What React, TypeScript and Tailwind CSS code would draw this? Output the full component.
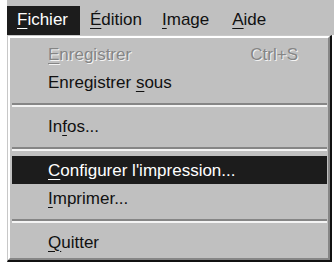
import React from "react";

const U = ({ children }: { children: React.ReactNode }) => (
  <span className="underline decoration-1 underline-offset-[3px]">{children}</span>
);

const Item = ({
  children,
  active,
  disabled,
  shortcut,
}: {
  children: React.ReactNode;
  active?: boolean;
  disabled?: boolean;
  shortcut?: string;
}) => (
  <div
    className={`flex h-[28px] items-center justify-between pl-[36px] pr-[29px] ${
      active ? "bg-[#1c1c1c] text-white" : disabled ? "text-[#858585]" : "text-[#111]"
    }`}
    style={disabled ? { textShadow: "1px 1px 0 #f4f4f4" } : undefined}
  >
    <span>{children}</span>
    {shortcut && <span>{shortcut}</span>}
  </div>
);

const Sep = () => (
  <div className="flex h-[16px] flex-col pt-[7px]">
    <div className="h-[2px] bg-[#868686]" />
    <div className="h-[2px] bg-[#f4f4f4]" />
  </div>
);

export default function App() {
  return (
    <div
      className="h-[265px] w-[334px] overflow-hidden bg-white pl-[7px] text-[17px] leading-none"
      style={{ fontFamily: '"Liberation Sans", Arial, sans-serif' }}
    >
      <div className="flex h-[35px] items-end bg-[#c0c0c0] text-[#111]">
        <div className="flex h-[29px] w-[73px] items-center bg-[#1c1c1c] pl-[10px] pb-[2px] text-white">
          <U>F</U>ichier
        </div>
        <div className="flex h-[29px] items-center px-[10px] pb-[2px]">
          <U>É</U>dition
        </div>
        <div className="flex h-[29px] items-center px-[10px] pb-[2px]">
          <U>I</U>mage
        </div>
        <div className="ml-[3px] flex h-[29px] items-center px-[10px] pb-[2px]">
          <U>A</U>ide
        </div>
      </div>
      <div className="w-[325px] border-l border-t border-r-2 border-b-2 border-l-[#c8c8c8] border-t-[#c8c8c8] border-r-[#111] border-b-[#111] bg-[#c0c0c0]">
        <div className="border-2 border-l-white border-t-white border-r-[#868686] border-b-[#868686] pl-[2px] pr-[1px] pt-[2px] pb-[2px]">
          <Item disabled shortcut="Ctrl+S">
            <U>E</U>nregistrer
          </Item>
          <Item>
            Enregistrer <U>s</U>ous
          </Item>
          <Sep />
          <Item>
            In<U>f</U>os...
          </Item>
          <Sep />
          <Item active>
            <U>C</U>onfigurer l'impression...
          </Item>
          <Item>
            <U>I</U>mprimer...
          </Item>
          <Sep />
          <Item>
            <U>Q</U>uitter
          </Item>
        </div>
      </div>
    </div>
  );
}
